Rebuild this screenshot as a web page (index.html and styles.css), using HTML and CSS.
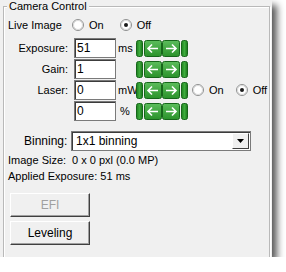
FILE: index.html
```html
<!DOCTYPE html>
<html>
<head>
<meta charset="utf-8">
<link rel="stylesheet" href="styles.css">
</head>
<body>
<div class="window">
  <div class="group">
    <span class="legend">Camera Control</span>
    <div class="live">
      <span class="live-label">Live Image</span>
      <label class="radio"><svg class="rb" width="12" height="12" viewBox="0 0 12 12"><circle cx="6" cy="6" r="5.5" fill="#fff" stroke="#8e8f8f"/><circle cx="6" cy="6" r="4.5" fill="none" stroke="#d8d8d8"/></svg>On</label>
      <label class="radio off"><svg class="rb" width="12" height="12" viewBox="0 0 12 12"><circle cx="6" cy="6" r="5.5" fill="#fff" stroke="#8e8f8f"/><circle cx="6" cy="6" r="4.5" fill="none" stroke="#d8d8d8"/><circle cx="6" cy="6" r="2" fill="#1a1a1a"/></svg>Off</label>
    </div>
    <div class="params">
      <span class="lbl">Exposure:</span><span class="tb">51</span><span class="unit">ms</span>
      <span class="arrows"><svg width="52" height="17" viewBox="0 0 52 17"><use href="#pad"/></svg></span><span></span>

      <span class="lbl">Gain:</span><span class="tb">1</span><span class="unit"></span>
      <span class="arrows"><svg width="52" height="17" viewBox="0 0 52 17"><use href="#pad"/></svg></span><span></span>

      <span class="lbl">Laser:</span><span class="tb">0</span><span class="unit">mW</span>
      <span class="arrows"><svg width="52" height="17" viewBox="0 0 52 17"><use href="#pad"/></svg></span>
      <span class="laser-radios">
        <label class="radio"><svg class="rb" width="12" height="12" viewBox="0 0 12 12"><circle cx="6" cy="6" r="5.5" fill="#fff" stroke="#8e8f8f"/><circle cx="6" cy="6" r="4.5" fill="none" stroke="#d8d8d8"/></svg>On</label>
        <label class="radio off2"><svg class="rb" width="12" height="12" viewBox="0 0 12 12"><circle cx="6" cy="6" r="5.5" fill="#fff" stroke="#8e8f8f"/><circle cx="6" cy="6" r="4.5" fill="none" stroke="#d8d8d8"/><circle cx="6" cy="6" r="2" fill="#1a1a1a"/></svg>Off</label>
      </span>

      <span class="lbl"></span><span class="tb">0</span><span class="unit pct">%</span>
      <span class="arrows"><svg width="52" height="17" viewBox="0 0 52 17"><use href="#pad"/></svg></span><span></span>
    </div>
    <div class="binning">
      <span class="bin-label">Binning:</span>
      <div class="combo"><span class="combo-text">1x1 binning</span><span class="combo-btn"><svg width="7" height="4" viewBox="0 0 7 4"><path d="M0 0H7L3.5 4Z" fill="#000"/></svg></span></div>
    </div>
    <div class="info"><span class="info-label">Image Size:</span><span>0 x 0 pxl (0.0 MP)</span></div>
    <div class="info">Applied Exposure: 51 ms</div>
    <div class="buttons">
      <div class="btn disabled">EFI</div>
      <div class="btn">Leveling</div>
    </div>
  </div>
</div>
<svg width="0" height="0" class="defs">
  <defs>
    <linearGradient id="gPill" x1="0" y1="0" x2="1" y2="0">
      <stop offset="0" stop-color="#1f7f1f"/>
      <stop offset="0.5" stop-color="#3dac3d"/>
      <stop offset="1" stop-color="#1a731a"/>
    </linearGradient>
    <linearGradient id="gSq" x1="0" y1="0" x2="0" y2="1">
      <stop offset="0" stop-color="#5cbd5c"/>
      <stop offset="1" stop-color="#2a922a"/>
    </linearGradient>
    <g id="pad">
      <rect x="0.5" y="0.5" width="6" height="16" rx="2" fill="url(#gPill)" stroke="#16661a"/>
      <rect x="8.5" y="0.5" width="17" height="16" rx="2" fill="url(#gSq)" stroke="#16661a"/>
      <rect x="26.5" y="0.5" width="17" height="16" rx="2" fill="url(#gSq)" stroke="#16661a"/>
      <rect x="45.5" y="0.5" width="6" height="16" rx="2" fill="url(#gPill)" stroke="#16661a"/>
      <path d="M22 8.5H12M16 4.5L12 8.5L16 12.5" fill="none" stroke="#fff" stroke-width="1.6"/>
      <path d="M30 8.5H40M36 4.5L40 8.5L36 12.5" fill="none" stroke="#fff" stroke-width="1.6"/>
    </g>
  </defs>
</svg>
</body>
</html>
```

FILE: styles.css
```css
* { box-sizing: border-box; }
body {
  margin: 0;
  background: #fff;
  font-family: "Liberation Sans", Arial, sans-serif;
  font-size: 11px;
  line-height: 13px;
  color: #000;
}
.defs { position: absolute; }
.window {
  width: 272px;
  height: 257px;
  background: #f0f0f0;
  overflow: hidden;
  box-shadow: 5px 5px 7px rgba(0, 0, 0, 0.65);
  padding-top: 6px;
  padding-left: 3px;
}
.group {
  position: relative;
  width: 267px;
  height: 300px;
  border: 1px solid #b9b9b9;
  box-shadow: inset 1px 1px 0 #fff, 1px 1px 0 #fff;
  padding: 10px 0 0 4px;
}
.legend {
  position: absolute;
  top: -7px;
  left: 3px;
  padding: 0 2px;
  background: #f0f0f0;
}
.live {
  display: flex;
  align-items: center;
  height: 16px;
}
.live-label { width: 64px; }
.radio {
  display: inline-flex;
  align-items: center;
}
.rb { margin-right: 5px; }
.live .off { margin-left: 16px; }
.params {
  display: grid;
  grid-template-columns: 62px 46px 20px 52px auto;
  grid-auto-rows: 20px;
  row-gap: 1px;
  align-items: center;
  margin-top: 5px;
}
.lbl { text-align: right; padding-right: 2px; }
.tb {
  grid-column: 2;
  height: 20px;
  width: 42px;
  margin-left: 4px;
  background: #fff;
  border: 1px solid #7a7a7a;
  box-shadow: inset 1px 1px 0 #3c3c3c;
  padding: 3px 0 0 2px;
  font-size: 12px;
}
.unit { padding-left: 2px; }
.pct { padding-left: 4px; }
.arrows { display: flex; height: 17px; }
.laser-radios { display: flex; align-items: center; padding-left: 4px; }
.laser-radios .off2 { margin-left: 12px; }
.binning {
  display: flex;
  align-items: center;
  margin-top: 10px;
  height: 20px;
}
.bin-label { width: 63px; padding-left: 16px; font-size: 12px; }
.combo {
  display: flex;
  width: 180px;
  height: 20px;
  background: #fff;
  border: 1px solid #7a7a7a;
  box-shadow: inset 1px 1px 0 #3c3c3c;
  padding: 1px;
  font-size: 12px;
}
.combo-text { flex: 1; padding: 2px 0 0 3px; }
.combo-btn {
  width: 17px;
  display: flex;
  align-items: center;
  justify-content: center;
  background: #f0f0f0;
  border: 1px solid;
  border-color: #fff #404040 #404040 #fff;
}
.info {
  display: flex;
  height: 16px;
  align-items: center;
}
.binning + .info { margin-top: 1px; }
.info-label { width: 64px; }
.buttons {
  display: flex;
  flex-direction: column;
  gap: 4px;
  margin-top: 9px;
  padding-left: 2px;
}
.btn {
  width: 80px;
  height: 24px;
  display: flex;
  align-items: center;
  justify-content: center;
  font-size: 12px;
  background: #f0f0f0;
  border: 1px solid;
  border-color: #fff #404040 #404040 #fff;
  box-shadow: inset -1px -1px 0 #a0a0a0;
}
.btn.disabled { color: #a0a0a0; }
```
